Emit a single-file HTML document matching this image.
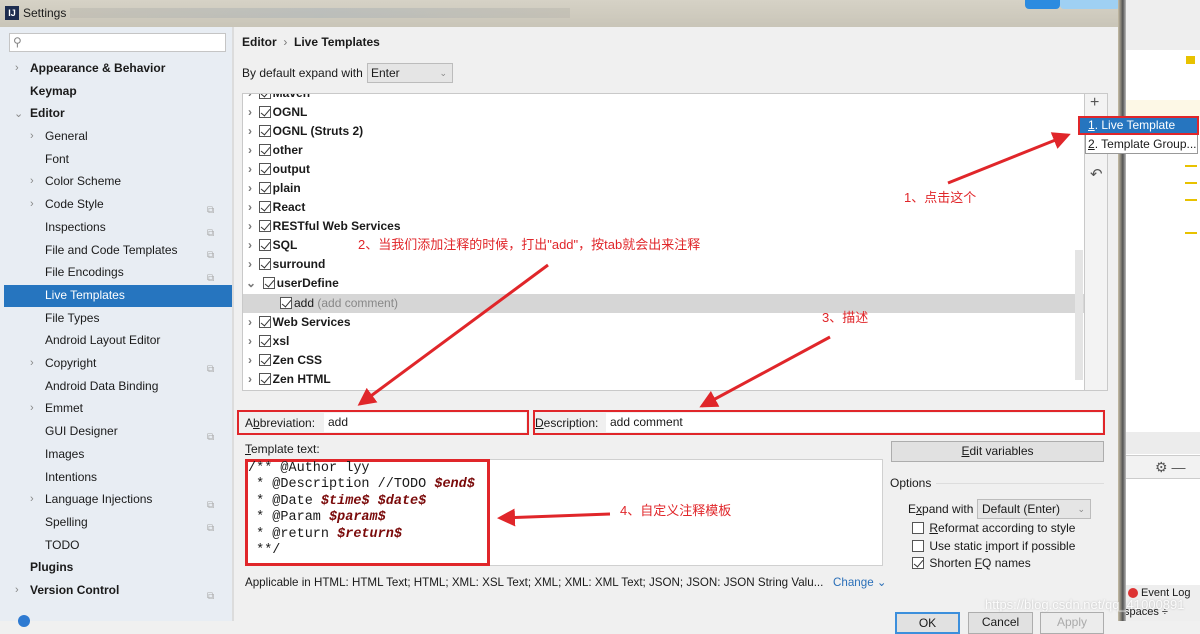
<!DOCTYPE html>
<html><head><meta charset="utf-8">
<style>
*{margin:0;padding:0;box-sizing:border-box}
body{width:1200px;height:621px;overflow:hidden;position:relative;background:#f0f0f0;font-family:"Liberation Sans","Noto Sans CJK SC",sans-serif;font-size:12px;color:#1a1a1a}
.a{position:absolute}
.side div.i{position:absolute;left:0;width:232px;height:22px;line-height:22px;white-space:nowrap}
.b{font-weight:bold}
.chev{position:absolute;color:#888;font-size:11px}
.row{position:absolute;left:0;height:19px;line-height:19px;width:842px;font-weight:bold;white-space:nowrap}
.cb{display:inline-block;width:12px;height:12px;border:1px solid #555;vertical-align:-2px;margin-right:2px;position:relative;background:#fff}
.cb.k::after{content:"";position:absolute;left:3px;top:0px;width:4px;height:8px;border:solid #333;border-width:0 1.5px 1.5px 0;transform:rotate(40deg)}
.red{color:#e0262a;font-size:13px;font-family:"Liberation Sans","Noto Sans CJK SC",sans-serif}
.mono{font-family:"Liberation Mono","DejaVu Sans Mono",monospace;font-size:13.5px;line-height:16.4px;white-space:pre}
.v{color:#7a0a0a;font-weight:bold;font-style:italic}
.btn{position:absolute;border:1px solid #adadad;background:#e1e1e1;text-align:center;line-height:19px}
</style></head><body>
<div class="a" style="left:0;top:0;width:1123px;height:27px;background:linear-gradient(#d6d2c6,#c9c5b8)"></div>
<div class="a" style="left:5px;top:6px;width:14px;height:14px;background:#1d2c4f;color:#fff;font-size:9px;font-weight:bold;text-align:center;line-height:14px">IJ</div>
<div class="a" style="left:23px;top:6px;font-size:12px">Settings</div>
<div class="a" style="left:70px;top:8px;width:500px;height:10px;background:linear-gradient(90deg,#bdbab0,#aeb5b8,#bdbab0);opacity:.6"></div>
<div class="a" style="left:1025px;top:0;width:35px;height:9px;background:#2c8be0;border-radius:0 0 4px 4px"></div>
<div class="a" style="left:1060px;top:0;width:60px;height:9px;background:#9fd0f3;border-radius:0 0 4px 4px"></div>
<div class="a" style="left:1123px;top:0;width:77px;height:621px;background:#fff"></div>
<div class="a" style="left:1123px;top:0;width:77px;height:50px;background:#eeeeee"></div>
<div class="a" style="left:1123px;top:100px;width:77px;height:18px;background:#fdf8e6"></div>
<div class="a" style="left:1186px;top:56px;width:9px;height:8px;background:#e8c200"></div>
<div class="a" style="left:1185px;top:165px;width:12px;height:2px;background:#e8c200"></div>
<div class="a" style="left:1185px;top:182px;width:12px;height:2px;background:#e8c200"></div>
<div class="a" style="left:1185px;top:199px;width:12px;height:2px;background:#e8c200"></div>
<div class="a" style="left:1185px;top:232px;width:12px;height:2px;background:#e8c200"></div>
<div class="a" style="left:1123px;top:432px;width:77px;height:22px;background:#ececec"></div>
<div class="a" style="left:1123px;top:455px;width:77px;height:24px;background:#f2f2f2;border-top:1px solid #ccc;border-bottom:1px solid #ccc"></div>
<div class="a" style="left:1155px;top:459px;color:#555;font-size:14px">⚙ —</div>
<div class="a" style="left:1123px;top:585px;width:77px;height:36px;background:#eeeeee"></div>
<div class="a" style="left:1128px;top:588px;width:10px;height:10px;border-radius:50%;background:#d33"></div>
<div class="a" style="left:1141px;top:587px;font-size:11px">Event Log</div>
<div class="a" style="left:1124px;top:606px;font-size:11px">spaces ÷</div>
<div class="a" style="left:1118px;top:0;width:8px;height:621px;background:linear-gradient(90deg,#c8bfa8,#555 60%,#bbb)"></div>
<div class="a side" style="left:0;top:27px;width:232px;height:594px;background:#e8edf3">
<div class="a" style="left:9px;top:6px;width:217px;height:19px;background:#fff;border:1px solid #c5c5c5;color:#888;padding-left:3px;line-height:17px">⚲</div>
</div>
<div class="a" style="left:232px;top:27px;width:2px;height:594px;background:#dcdcdc"></div>
<div class="a" style="left:4px;top:285px;width:228px;height:22px;background:#2675bf"></div>
<div class="side">
<div class="i b" style="top:57px;padding-left:30px">Appearance &amp; Behavior</div><span class="chev" style="left:15px;top:62px">›</span>
<div class="i b" style="top:80px;padding-left:30px">Keymap</div>
<div class="i b" style="top:102px;padding-left:30px">Editor</div><span class="chev" style="left:14px;top:107px">⌄</span>
<div class="i" style="top:125px;padding-left:45px">General</div><span class="chev" style="left:30px;top:130px">›</span>
<div class="i" style="top:148px;padding-left:45px">Font</div>
<div class="i" style="top:170px;padding-left:45px">Color Scheme</div><span class="chev" style="left:30px;top:175px">›</span>
<div class="i" style="top:193px;padding-left:45px">Code Style</div><span class="chev" style="left:30px;top:198px">›</span>
<div class="i" style="top:216px;padding-left:45px">Inspections</div>
<div class="i" style="top:239px;padding-left:45px">File and Code Templates</div>
<div class="i" style="top:261px;padding-left:45px">File Encodings</div>
<div class="i" style="top:284px;padding-left:45px;color:#fff">Live Templates</div>
<div class="i" style="top:307px;padding-left:45px">File Types</div>
<div class="i" style="top:329px;padding-left:45px">Android Layout Editor</div>
<div class="i" style="top:352px;padding-left:45px">Copyright</div><span class="chev" style="left:30px;top:357px">›</span>
<div class="i" style="top:375px;padding-left:45px">Android Data Binding</div>
<div class="i" style="top:397px;padding-left:45px">Emmet</div><span class="chev" style="left:30px;top:402px">›</span>
<div class="i" style="top:420px;padding-left:45px">GUI Designer</div>
<div class="i" style="top:443px;padding-left:45px">Images</div>
<div class="i" style="top:466px;padding-left:45px">Intentions</div>
<div class="i" style="top:488px;padding-left:45px">Language Injections</div><span class="chev" style="left:30px;top:493px">›</span>
<div class="i" style="top:511px;padding-left:45px">Spelling</div>
<div class="i" style="top:534px;padding-left:45px">TODO</div>
<div class="i b" style="top:556px;padding-left:30px">Plugins</div>
<div class="i b" style="top:579px;padding-left:30px">Version Control</div><span class="chev" style="left:15px;top:584px">›</span>
</div>
<div class="a" style="left:207px;top:200px;color:#aaa;font-size:10px;line-height:22.7px">⧉<br>⧉<br>⧉<br>⧉<br><br><br><br>⧉<br><br><br>⧉<br><br><br>⧉<br>⧉<br><br><br>⧉</div>
<div class="a b" style="left:242px;top:35px">Editor &nbsp;<span style="color:#777;font-weight:normal">›</span>&nbsp; Live Templates</div>
<div class="a" style="left:242px;top:66px">By default expand with</div>
<div class="a" style="left:367px;top:63px;width:86px;height:20px;background:#e5e5e5;border:1px solid #bcbcbc;padding-left:3px;line-height:18px">Enter<span style="position:absolute;right:5px;color:#888;font-size:9px">⌄</span></div>
<div class="a" style="left:242px;top:93px;width:843px;height:298px;background:#fff;border:1px solid #c9c9c9;overflow:hidden">
<div class="a" style="left:0;top:200px;width:842px;height:19px;background:#d6d6d6"></div>
<div class="row" style="top:-10px;padding-left:5px"><span style="color:#777">›&nbsp;&nbsp;</span><span class="cb k"></span>Maven</div>
<div class="row" style="top:9px;padding-left:5px"><span style="color:#777">›&nbsp;&nbsp;</span><span class="cb k"></span>OGNL</div>
<div class="row" style="top:28px;padding-left:5px"><span style="color:#777">›&nbsp;&nbsp;</span><span class="cb k"></span>OGNL (Struts 2)</div>
<div class="row" style="top:47px;padding-left:5px"><span style="color:#777">›&nbsp;&nbsp;</span><span class="cb k"></span>other</div>
<div class="row" style="top:66px;padding-left:5px"><span style="color:#777">›&nbsp;&nbsp;</span><span class="cb k"></span>output</div>
<div class="row" style="top:85px;padding-left:5px"><span style="color:#777">›&nbsp;&nbsp;</span><span class="cb k"></span>plain</div>
<div class="row" style="top:104px;padding-left:5px"><span style="color:#777">›&nbsp;&nbsp;</span><span class="cb k"></span>React</div>
<div class="row" style="top:123px;padding-left:5px"><span style="color:#777">›&nbsp;&nbsp;</span><span class="cb k"></span>RESTful Web Services</div>
<div class="row" style="top:142px;padding-left:5px"><span style="color:#777">›&nbsp;&nbsp;</span><span class="cb k"></span>SQL</div>
<div class="row" style="top:161px;padding-left:5px"><span style="color:#777">›&nbsp;&nbsp;</span><span class="cb k"></span>surround</div>
<div class="row" style="top:180px;padding-left:3px"><span style="color:#777">⌄&nbsp;&nbsp;</span><span class="cb k"></span>userDefine</div>
<div class="row" style="top:200px;padding-left:37px;font-weight:normal"><span class="cb k"></span>add <span style="color:#888">(add comment)</span></div>
<div class="row" style="top:219px;padding-left:5px"><span style="color:#777">›&nbsp;&nbsp;</span><span class="cb k"></span>Web Services</div>
<div class="row" style="top:238px;padding-left:5px"><span style="color:#777">›&nbsp;&nbsp;</span><span class="cb k"></span>xsl</div>
<div class="row" style="top:257px;padding-left:5px"><span style="color:#777">›&nbsp;&nbsp;</span><span class="cb k"></span>Zen CSS</div>
<div class="row" style="top:276px;padding-left:5px"><span style="color:#777">›&nbsp;&nbsp;</span><span class="cb k"></span>Zen HTML</div>
</div>
<div class="a" style="left:1075px;top:250px;width:8px;height:130px;background:#e4e4e4"></div>
<div class="a" style="left:1085px;top:93px;width:23px;height:298px;background:#f3f3f3;border:1px solid #c9c9c9;border-left:none"></div>
<div class="a" style="left:1090px;top:94px;font-size:16px;color:#555">+</div>
<div class="a" style="left:1090px;top:165px;font-size:15px;color:#555">↶</div>
<div class="a" style="left:1085px;top:116px;width:113px;height:38px;background:#fff;border:1px solid #999"></div>
<div class="a" style="left:1078px;top:116px;width:121px;height:19px;background:#2675bf;border:2px solid #e0262a;color:#fff;padding-left:8px;line-height:15px"><u>1</u>. Live Template</div>
<div class="a" style="left:1088px;top:137px"><u>2</u>. Template Group...</div>
<div class="a" style="left:237px;top:410px;width:292px;height:25px;border:2px solid #e0262a"></div>
<div class="a" style="left:245px;top:416px">A<u>b</u>breviation:</div>
<div class="a" style="left:324px;top:413px;width:202px;height:19px;background:#fff;padding-left:4px;line-height:19px">add</div>
<div class="a" style="left:533px;top:410px;width:572px;height:25px;border:2px solid #e0262a"></div>
<div class="a" style="left:535px;top:416px"><u>D</u>escription:</div>
<div class="a" style="left:606px;top:413px;width:496px;height:19px;background:#fff;padding-left:4px;line-height:19px">add comment</div>
<div class="a" style="left:245px;top:442px"><u>T</u>emplate text:</div>
<div class="a" style="left:245px;top:459px;width:638px;height:107px;background:#fff;border:1px solid #d0d0d0"></div>
<div class="a" style="left:245px;top:459px;width:245px;height:107px;border:3px solid #e0262a"></div>
<div class="a mono" style="left:248px;top:461px">/** @Author lyy
 * @Description //TODO <span class="v">$end$</span>
 * @Date <span class="v">$time$</span> <span class="v">$date$</span>
 * @Param <span class="v">$param$</span>
 * @return <span class="v">$return$</span>
 **/</div>
<div class="a" style="left:245px;top:575px;font-size:11.6px;white-space:nowrap">Applicable in HTML: HTML Text; HTML; XML: XSL Text; XML; XML: XML Text; JSON; JSON: JSON String Valu...&nbsp;&nbsp;&nbsp;<span style="color:#2a6fb8">Change ⌄</span></div>
<div class="btn" style="left:891px;top:441px;width:213px;height:21px"><u>E</u>dit variables</div>
<div class="a" style="left:890px;top:476px">Options</div>
<div class="a" style="left:936px;top:483px;width:168px;height:1px;background:#ddd"></div>
<div class="a" style="left:908px;top:502px">E<u>x</u>pand with</div>
<div class="a" style="left:977px;top:499px;width:114px;height:20px;background:#e5e5e5;border:1px solid #bcbcbc;padding-left:4px;line-height:18px">Default (Enter)<span style="position:absolute;right:5px;color:#888;font-size:9px">⌄</span></div>
<div class="a" style="left:912px;top:521px"><span class="cb"></span> <u>R</u>eformat according to style</div>
<div class="a" style="left:912px;top:539px"><span class="cb"></span> Use static <u>i</u>mport if possible</div>
<div class="a" style="left:912px;top:556px"><span class="cb k"></span> Shorten <u>F</u>Q names</div>
<div class="btn" style="left:895px;top:612px;width:65px;height:22px;border:2px solid #3c8fdc">OK</div>
<div class="btn" style="left:968px;top:612px;width:65px;height:22px">Cancel</div>
<div class="btn" style="left:1040px;top:612px;width:64px;height:22px;color:#aaa;background:#ececec">Apply</div>
<div class="a" style="left:18px;top:615px;width:12px;height:12px;border-radius:50%;background:#2e7ad1"></div>
<div class="a" style="left:985px;top:597px;color:#fff;font-size:13px;text-shadow:0 0 2px #aaa;opacity:.8">https://blog.csdn.net/qq_41000891</div>
<div class="a red" style="left:904px;top:187px">1、点击这个</div>
<div class="a red" style="left:358px;top:234px">2、当我们添加注释的时候，打出"add"，按tab就会出来注释</div>
<div class="a red" style="left:822px;top:307px">3、描述</div>
<div class="a red" style="left:620px;top:500px">4、自定义注释模板</div>
<svg class="a" style="left:0;top:0" width="1200" height="621">
<defs><marker id="ar" markerWidth="6" markerHeight="6" refX="5" refY="3" orient="auto"><path d="M0,0 L6,3 L0,6 Z" fill="#e0262a"/></marker></defs>
<g stroke="#e0262a" stroke-width="3" fill="none" marker-end="url(#ar)">
<line x1="948" y1="183" x2="1068" y2="135"/>
<line x1="548" y1="265" x2="360" y2="404"/>
<line x1="830" y1="337" x2="702" y2="406"/>
<line x1="610" y1="514" x2="500" y2="518"/>
</g></svg>
</body></html>
